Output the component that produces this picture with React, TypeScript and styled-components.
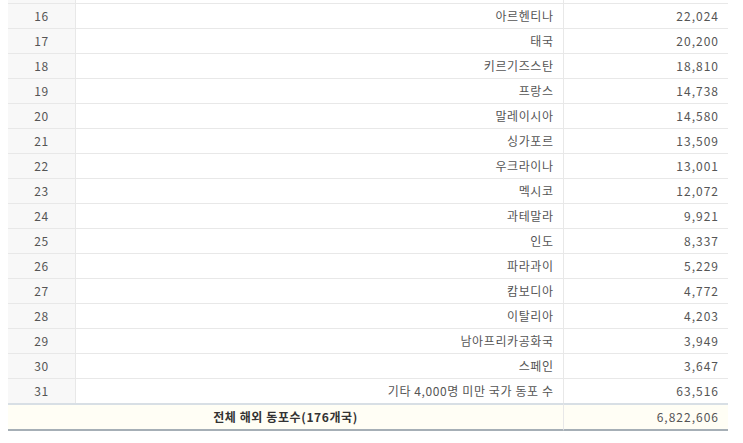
import React from "react";
import styled, { createGlobalStyle } from "styled-components";

const GlobalStyle = createGlobalStyle`
  html, body {
    margin: 0;
    padding: 0;
    background: #fff;
  }
  body {
    font-family: "Noto Sans CJK KR", "Noto Sans", sans-serif;
    font-size: 12px;
    color: #555;
  }
`;

interface rowInterface {
  rank: number;
  country: string;
  count: string;
}

const rows: rowInterface[] = [
  { rank: 16, country: "아르헨티나", count: "22,024" },
  { rank: 17, country: "태국", count: "20,200" },
  { rank: 18, country: "키르기즈스탄", count: "18,810" },
  { rank: 19, country: "프랑스", count: "14,738" },
  { rank: 20, country: "말레이시아", count: "14,580" },
  { rank: 21, country: "싱가포르", count: "13,509" },
  { rank: 22, country: "우크라이나", count: "13,001" },
  { rank: 23, country: "멕시코", count: "12,072" },
  { rank: 24, country: "과테말라", count: "9,921" },
  { rank: 25, country: "인도", count: "8,337" },
  { rank: 26, country: "파라과이", count: "5,229" },
  { rank: 27, country: "캄보디아", count: "4,772" },
  { rank: 28, country: "이탈리아", count: "4,203" },
  { rank: 29, country: "남아프리카공화국", count: "3,949" },
  { rank: 30, country: "스페인", count: "3,647" },
  { rank: 31, country: "기타 4,000명 미만 국가 동포 수", count: "63,516" },
];

const App = () => {
  return (
    <Page>
      <GlobalStyle />
      <StatTable>
        <colgroup>
          <col style={{ width: "68px" }} />
          <col style={{ width: "488px" }} />
          <col style={{ width: "164px" }} />
        </colgroup>
        <tbody>
          {/* tail of the row scrolled above the view */}
          <StubRow>
            <RankCell />
            <Cell $divider />
            <Cell />
          </StubRow>
          {rows.map((row) => (
            <tr key={row.rank}>
              <RankCell>{row.rank}</RankCell>
              <Cell $divider>{row.country}</Cell>
              <Cell $numeric>{row.count}</Cell>
            </tr>
          ))}
        </tbody>
        <tfoot>
          <tr>
            <TotalCell colSpan={2} $label>
              전체 해외 동포수(176개국)
            </TotalCell>
            <TotalCell>6,822,606</TotalCell>
          </tr>
        </tfoot>
      </StatTable>
    </Page>
  );
};

const Page = styled.div`
  width: 100%;
  height: 443px;
  overflow: hidden;
  padding: 0 8px;
  box-sizing: border-box;
`;

const StatTable = styled.table`
  width: 720px;
  border-collapse: separate;
  border-spacing: 0;
  table-layout: fixed;
  tbody tr:last-child td {
    border-bottom: none;
  }
`;

const StubRow = styled.tr`
  td {
    height: 3px;
    line-height: 3px;
  }
`;

const Cell = styled.td<{ $divider?: boolean; $numeric?: boolean }>`
  height: 24px;
  padding: 0 ${(p) => (p.$numeric ? "9px" : "9.4px")} 0 0;
  box-sizing: content-box;
  text-align: right;
  line-height: 24px;
  white-space: nowrap;
  color: #555;
  letter-spacing: ${(p) => (p.$numeric ? "1px" : "0.6px")};
  border-bottom: 1px solid #e8e8e8;
  border-right: ${(p) => (p.$divider ? "1px solid #e8e8e8" : "none")};
`;

const RankCell = styled.td`
  height: 24px;
  padding: 0;
  text-align: center;
  line-height: 24px;
  color: #555;
  letter-spacing: 0.5px;
  background: #f8f8f8;
  border-bottom: 1px solid #e8e8e8;
  border-right: 1px solid #e8e8e8;
`;

const TotalCell = styled.td<{ $label?: boolean }>`
  height: 24px;
  line-height: 24px;
  padding: ${(p) => (p.$label ? "0" : "0 9px 0 0")};
  text-align: ${(p) => (p.$label ? "center" : "right")};
  font-weight: ${(p) => (p.$label ? "bold" : "normal")};
  color: ${(p) => (p.$label ? "#333" : "#555")};
  letter-spacing: ${(p) => (p.$label ? "0.6px" : "1px")};
  background: #fffef5;
  border-top: 2px solid #d8dfe5;
  border-bottom: 2px solid #a6afb6;
  border-right: ${(p) => (p.$label ? "1px solid #e8e8e8" : "none")};
`;

export default App;
